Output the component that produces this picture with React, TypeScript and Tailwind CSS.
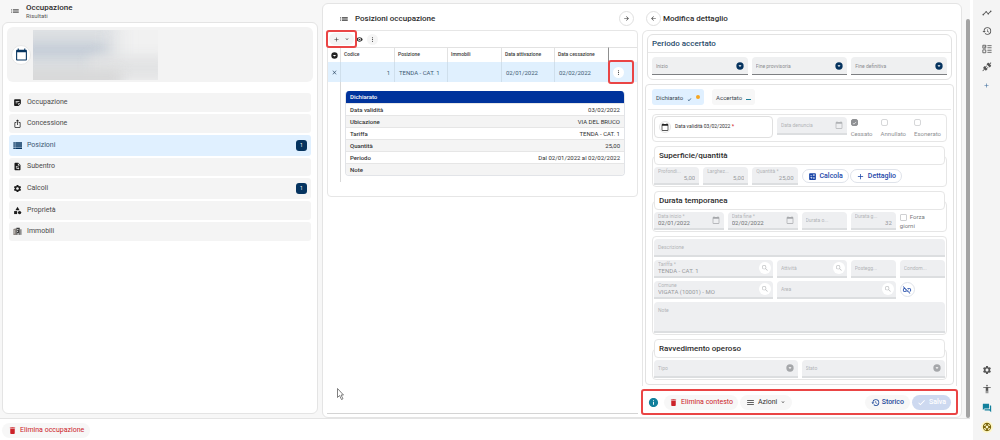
import { useId, type ReactNode } from "react";
import {
  MdAccessibility,
  MdAdd,
  MdArrowBack,
  MdArrowForward,
  MdCalculate,
  MdCalendarToday,
  MdCategory,
  MdCheck,
  MdClose,
  MdDelete,
  MdExpandMore,
  MdForum,
  MdHistory,
  MdInfo,
  MdIosShare,
  MdLinkOff,
  MdList,
  MdMenu,
  MdMoreVert,
  MdRemoveRedEye,
  MdSearch,
  MdSettings,
  MdStickyNote2,
  MdSupport,
  MdTimeline,
} from "react-icons/md";

const FIELD =
  "relative flex min-w-0 items-center rounded-t-sm border-b-2 border-[#dcdee0] bg-[#eeeff1] px-1 text-[#b3b5b8]";

function DropCircle({ className }: { className: string }) {
  return (
    <svg viewBox="0 0 24 24" className={`size-2 shrink-0 ${className}`} aria-hidden="true">
      <circle cx="12" cy="12" r="11" fill="currentColor" />
      <path d="M7.500 10h9L12 15z" fill="#fff" />
    </svg>
  );
}

function PlugIcon({ className }: { className: string }) {
  return (
    <svg viewBox="0 0 24 24" className={className} fill="currentColor" aria-hidden="true">
      <path d="M21.4 7.5c.8.8.8 2.1 0 2.8l-2.8 2.9-7.8-7.8 2.9-2.8c.7-.8 2-.8 2.8 0l1.4 1.4L21 .8 22.4 2.2 19.2 5.400zM15.600 13.300l-1.400-1.400-2.900 2.800-2.100-2.100 2.800-2.900-1.400-1.400-2.800 2.900-1.500-1.500-2.800 2.900c-.8.800-.8 2.100 0 2.800l1.400 1.400-4 4 1.400 1.400 4-4 1.400 1.400c.8.800 2.100.800 2.800 0l2.900-2.800-1.500-1.500z" />
    </svg>
  );
}

function DocSwapIcon() {
  return (
    <svg viewBox="0 0 24 24" className="size-[9px]" fill="currentColor" aria-hidden="true">
      <path
        fillRule="evenodd"
        d="M14 2H6a2 2 0 0 0-2 2v16a2 2 0 0 0 2 2h12a2 2 0 0 0 2-2V8zM13 9V3.500L18.500 9zM7 13l3-3v2h5v2h-5v2zM17 17l-3 3v-2H9v-2h5v-2z"
      />
    </svg>
  );
}

function BuildingsIcon() {
  return (
    <svg viewBox="0 0 24 24" className="size-[9px]" aria-hidden="true">
      <path d="M1 5 9 3v18H1z" fill="#8c8580" />
      <path d="M9 2h9v19H9z" fill="#3b3b3b" />
      <path d="M18 6h5v15h-5z" fill="#8f8f8f" />
      <path d="M11 5h2v3h-2zM15 5h1v3h-1zM11 10h2v3h-2zM4 8h1v10H4zM12 16h3v5h-3z" fill="#eee" />
    </svg>
  );
}

type FieldProps = {
  label: string;
  value?: string;
  span: string;
  right?: boolean;
  dark?: boolean;
  icon?: ReactNode;
};

function Field({ label, value, span, right, dark, icon }: FieldProps) {
  const id = useId();
  return (
    <div className={`${FIELD} h-[18px] ${span}`}>
      {value ? (
        <div className="flex min-w-0 flex-1 flex-col">
          <label htmlFor={id} className="truncate text-[5px] leading-[6px]">
            {label}
          </label>
          <input
            id={id}
            disabled
            defaultValue={value}
            className={`h-[8px] w-full bg-transparent text-[6px] leading-[8px] ${right ? "text-right" : ""} ${dark ? "text-[#707275]" : "text-[#97999c]"}`}
          />
        </div>
      ) : (
        <>
          <label htmlFor={id} className="flex-1 truncate text-[5px] leading-[6px]">
            {label}
          </label>
          <input id={id} disabled className="absolute inset-0 w-full bg-transparent" />
        </>
      )}
      {icon}
    </div>
  );
}

function SelectField({ label, span, disabled }: { label: string; span: string; disabled?: boolean }) {
  const id = useId();
  return (
    <div
      className={`relative flex h-[18px] min-w-0 items-center rounded-t-sm px-1 ${span} ${
        disabled
          ? "border-b-2 border-[#dcdee0] bg-[#eeeff1] text-[#b3b5b8]"
          : "border-b border-[#7d7f82] bg-[#eff0f1] text-[#8b8d90]"
      }`}
    >
      <label htmlFor={id} className="flex-1 truncate text-[5px] leading-[6px]">
        {label}
      </label>
      <DropCircle className={disabled ? "text-[#a5a7aa]" : "text-[#05335f]"} />
      <select id={id} disabled={disabled} className="absolute inset-0 w-full appearance-none bg-transparent">
        <option value="" />
      </select>
    </div>
  );
}

function SearchButton() {
  return (
    <button
      type="button"
      aria-label="Cerca"
      disabled
      className="relative -mr-[2px] flex size-3 shrink-0 items-center justify-center rounded-full bg-white text-[#bcbec0]"
    >
      <MdSearch className="size-2" />
    </button>
  );
}

function Calendar({ className }: { className: string }) {
  return <MdCalendarToday className={`size-2 shrink-0 ${className}`} aria-hidden="true" />;
}

function TickBox({ label, checked }: { label: string; checked?: boolean }) {
  return (
    <label className="flex flex-col gap-1 text-[6px] leading-[8px] text-[#8f9194]">
      <span
        className={`relative flex size-[7px] items-center justify-center rounded-[2px] border ${
          checked ? "border-[#8f9194] bg-[#8f9194]" : "border-[#d6d7d9] bg-white"
        }`}
      >
        <input type="checkbox" defaultChecked={checked} disabled className="absolute inset-0 size-full appearance-none" />
        {checked && <MdCheck className="size-[6px] text-white" />}
      </span>
      {label}
    </label>
  );
}

function Group({ title, children }: { title: string; children: ReactNode }) {
  return (
    <section className="relative px-[2px] pb-[2px]">
      <div className="absolute inset-x-0 top-[10px] bottom-0 rounded border border-[#e6e6e6]" />
      <h3 className="relative flex h-[19px] items-center rounded border border-[#e6e6e6] bg-white px-1 text-[8px] font-medium text-[#2c2c2c]">
        {title}
      </h3>
      <div className="relative mt-[2px] grid grid-cols-12 gap-1">{children}</div>
    </section>
  );
}

const MENU: { label: string; icon: ReactNode; badge?: number; active?: boolean }[] = [
  { label: "Occupazione", icon: <MdStickyNote2 className="size-[9px]" /> },
  { label: "Concessione", icon: <MdIosShare className="size-[9px]" /> },
  {
    label: "Posizioni",
    badge: 1,
    active: true,
    icon: (
      <svg viewBox="0 0 24 24" className="size-[9px]" fill="#05335f" aria-hidden="true">
        <path d="M1 3h4v4H1zM6 3h18v4H6zM1 8.500h4v4H1zM6 8.500h18v4H6zM1 14h4v3H1zM6 14h18v3H6zM1 18.500h4v3H1zM6 18.500h18v3H6z" />
      </svg>
    ),
  },
  { label: "Subentro", icon: <DocSwapIcon /> },
  { label: "Calcoli", badge: 1, icon: <MdSettings className="size-[9px]" /> },
  { label: "Proprietà", icon: <MdCategory className="size-[9px]" /> },
  { label: "Immobili", icon: <BuildingsIcon /> },
];

const DETAILS: [string, string][] = [
  ["Data validità", "03/02/2022"],
  ["Ubicazione", "VIA DEL BRUCO"],
  ["Tariffa", "TENDA - CAT. 1"],
  ["Quantità", "25,00"],
  ["Periodo", "Dal 02/01/2022 al 02/02/2022"],
  ["Note", ""],
];

function LeftColumn() {
  return (
    <section className="flex flex-col pr-1 pb-1 pl-[2px]">
      <header className="flex h-[22px] items-center gap-[6px] pl-2 text-[#555]">
        <MdList className="size-[10px]" />
        <div>
          <h1 className="text-[8px] leading-[8px] font-medium text-[#2c2c2c]">Occupazione</h1>
          <p className="text-[6px] leading-[7px] text-[#555]">Risultati</p>
        </div>
      </header>
      <div className="flex-1 rounded-md border border-[#e4e4e4] bg-white px-1 pt-1">
        <div className="flex h-[55px] items-center gap-[2px] rounded-md bg-[#f3f3f3] pl-1">
          <span className="flex size-5 items-center justify-center rounded-full border border-[#e8e8e8] bg-white text-[#05335f]">
            <MdCalendarToday className="size-[13px]" />
          </span>
          <div className="relative h-[50px] w-[125px] overflow-hidden bg-[#f1f1f1]">
            <div className="absolute -top-3 -left-5 h-20 w-[104px] bg-[#dcdfe2] blur-[9px]" />
            <div className="absolute top-[14px] -left-3 h-3 w-[84px] bg-[#c1cad6] blur-[6px]" />
            <div className="absolute top-[26px] left-14 h-6 w-20 bg-[#e2e3e4] blur-[6px]" />
            <div className="absolute top-[40px] -left-3 h-4 w-[100px] bg-[#d8d8d8] blur-[6px]" />
          </div>
        </div>
        <nav className="mx-[2px] mt-[11px] grid h-[148px] gap-[2px]">
          {MENU.map((item) => (
            <a
              key={item.label}
              href="#"
              className={`flex items-center gap-[5px] rounded-[3px] px-1 text-[7px] leading-[9px] ${
                item.active ? "bg-[#e0f0ff] text-[#3a5673]" : "bg-[#f4f4f4] text-[#4a4a4a]"
              }`}
            >
              <span className="text-[#1b1b1b]">{item.icon}</span>
              <span className="flex-1">{item.label}</span>
              {item.badge && (
                <span className="flex h-[11px] w-[11px] items-center justify-center rounded-[3px] bg-[#05335f] text-[5px] text-white">
                  {item.badge}
                </span>
              )}
            </a>
          ))}
        </nav>
      </div>
    </section>
  );
}

function Positions() {
  const head = "border-l border-[#e2e2e2] px-[3px] text-left text-[5px] font-medium text-[#3c3c3c]";
  const cell = "border-l border-[#cfdfec] px-1";
  return (
    <section className="relative flex min-w-0 flex-col">
      <header className="flex h-[26px] items-center pt-[3px] pr-1 pl-3 text-[#333]">
        <MdList className="size-[10px]" />
        <h2 className="flex-1 pl-[6px] text-[8px] font-medium text-[#2c2c2c]">Posizioni occupazione</h2>
        <button
          type="button"
          aria-label="Avanti"
          className="flex size-[15px] items-center justify-center rounded-full border border-[#e0e0e0] bg-white"
        >
          <MdArrowForward className="size-[7px]" />
        </button>
      </header>
      <div className="rounded-sm border border-[#e6e6e6] pb-[14px]">
        <div className="flex h-4 items-center text-[#333]">
          <div className="relative z-10 rounded-[1px] outline-2 outline-[#ea4545]">
            <div className="flex h-[14px] w-[27px] items-center px-[1px]">
              <div className="flex h-3 flex-1 items-center justify-between rounded-full bg-[#f4f4f4] px-1">
                <button type="button" aria-label="Aggiungi">
                  <MdAdd className="size-[7px]" />
                </button>
                <button type="button" aria-label="Altre aggiunte">
                  <MdExpandMore className="size-[6px]" />
                </button>
              </div>
            </div>
          </div>
          <button type="button" aria-label="Mostra" className="pl-px">
            <MdRemoveRedEye className="size-[7px]" />
          </button>
          <button
            type="button"
            aria-label="Altro"
            className="ml-1 flex size-[11px] items-center justify-center rounded-full bg-[#f5f5f5]"
          >
            <MdMoreVert className="size-[7px]" />
          </button>
        </div>
        <table className="w-full table-fixed border-separate border-spacing-0">
          <colgroup>
            <col className="w-[12px]" />
            <col className="w-[54px]" />
            <col className="w-[53px]" />
            <col className="w-[54px]" />
            <col className="w-[53px]" />
            <col className="w-[54px]" />
            <col />
          </colgroup>
          <thead>
            <tr className="h-[15px] [&>th]:border-t [&>th]:border-t-[#e2e2e2]">
              <th className="p-0" aria-label="Espandi">
                <svg viewBox="0 0 24 24" className="mx-auto size-[7px]" aria-hidden="true">
                  <circle cx="12" cy="12" r="11" fill="#222" />
                  <path d="M6 10h12l-6 5z" fill="#fff" />
                </svg>
              </th>
              <th className={head}>Codice</th>
              <th className={head}>Posizione</th>
              <th className={head}>Immobili</th>
              <th className={head}>Data attivazione</th>
              <th className={head}>Data cessazione</th>
              <th className="border-l border-[#8f8f8f]" aria-label="Azioni" />
            </tr>
          </thead>
          <tbody>
            <tr className="h-5 bg-[#e0f0fe] text-[6px] text-[#3f5b75]">
              <td className="p-0">
                <button type="button" aria-label="Chiudi" className="mx-auto block">
                  <MdClose className="size-[7px]" />
                </button>
              </td>
              <td className={`${cell} text-right`}>1</td>
              <td className={cell}>TENDA - CAT. 1</td>
              <td className={cell} />
              <td className={cell}>02/01/2022</td>
              <td className={cell}>02/02/2022</td>
              <td className="p-0">
                <div className="mx-[2px] flex h-5 w-[22px] items-center rounded-[1px] pl-[3px] outline-2 outline-[#ea4545]">
                  <button
                    type="button"
                    aria-label="Altro"
                    className="flex size-[11px] items-center justify-center rounded-full bg-white text-[#333]"
                  >
                    <MdMoreVert className="size-[7px]" />
                  </button>
                </div>
              </td>
            </tr>
            <tr>
              <td className="p-0" />
              <td colSpan={6} className="border-l border-[#d9d9d9] pt-[9px] pr-3 pb-[6px] pl-1">
                <div className="overflow-hidden rounded border border-t-0 border-[#e2e4e8]">
                  <table className="w-full border-separate border-spacing-0 text-[6px] leading-[8px] text-[#333]">
                    <thead>
                      <tr className="h-3 bg-[#00339c] text-white">
                        <th colSpan={2} className="px-1 py-0 text-left font-medium">
                          Dichiarato
                        </th>
                      </tr>
                    </thead>
                    <tbody>
                      {DETAILS.map(([name, value]) => (
                        <tr key={name} className="h-3 even:bg-[#f4f4f4]">
                          <th className="border-t border-[#e6e6e6] px-1 py-0 text-left font-medium">{name}</th>
                          <td className="border-t border-[#e6e6e6] px-1 py-0 text-right">{value}</td>
                        </tr>
                      ))}
                    </tbody>
                  </table>
                </div>
              </td>
            </tr>
          </tbody>
        </table>
      </div>
      <div className="mt-auto mb-[3px] border-b border-[#d4d4d4]" />
      <svg viewBox="0 0 14 24" className="absolute top-[384px] left-[10px] h-3 w-[7px]" aria-hidden="true">
        <path d="M1 1v18l4-4 4 8 3-1.500-4-7.500h5z" fill="#fff" stroke="#555" strokeWidth="1.500" />
      </svg>
    </section>
  );
}

function DetailForm() {
  const pill = "flex items-center justify-center rounded-full text-[7px]";
  return (
    <section className="flex min-w-0 flex-col">
      <header className="flex h-[26px] items-center gap-[2px] pt-[3px] pl-1 text-[#333]">
        <button
          type="button"
          aria-label="Indietro"
          className="flex size-[15px] items-center justify-center rounded-full border border-[#e0e0e0] bg-white"
        >
          <MdArrowBack className="size-[7px]" />
        </button>
        <h2 className="text-[8px] font-medium text-[#2c2c2c]">Modifica dettaglio</h2>
      </header>
      <div className="flex-1 rounded-t-md border border-b-0 border-[#e6e6e6] px-[2px] pt-[3px]">
        <section className="mx-[2px] rounded-md border border-[#e2e2e2] pb-1">
          <h3 className="flex h-[18px] items-center border-b border-[#e8e8e8] px-1 text-[8px] font-medium text-[#274a6b]">
            Periodo accertato
          </h3>
          <div className="grid grid-cols-3 gap-1 px-1 pt-1">
            <SelectField label="Inizio" span="" />
            <SelectField label="Fine provvisoria" span="" />
            <SelectField label="Fine definitiva" span="" />
          </div>
        </section>
        <div className="mt-1 rounded border border-[#e2e2e2] px-[2px] pb-1">
          <div role="tablist" className="flex h-[25px] items-center gap-2 border-b border-[#e8e8e8] px-1 text-[6px] text-[#3c4650]">
            <button
              type="button"
              role="tab"
              aria-selected="true"
              className="flex h-4 items-center gap-1 rounded-[3px] bg-[#e0f0ff] px-1"
            >
              Dichiarato
              <MdCheck className="mt-1 size-[5px] text-[#05335f]" />
              <span className="size-1 rounded-full bg-[#f5a623]" />
            </button>
            <button
              type="button"
              role="tab"
              aria-selected="false"
              className="flex h-4 items-center gap-1 rounded-[3px] bg-[#f7f7f7] px-1"
            >
              Accertato
              <span className="mt-1 h-px w-[5px] bg-[#1d7f99]" />
            </button>
          </div>
          <div className="flex flex-col gap-1 px-1 pt-1">
            <div className="grid grid-cols-12 items-start gap-1 rounded border border-[#e6e6e6] p-px pb-[3px]">
              <label className="col-span-5 flex h-[22px] items-center gap-1 rounded border border-[#e0e0e0] px-1 text-[5px] text-[#333]">
                <span className="flex size-3 items-center justify-center rounded-full border border-[#e4e4e4]">
                  <Calendar className="text-[#222]" />
                </span>
                <span>
                  Data validità 03/02/2022 <b className="text-[#d32f2f]">*</b>
                </span>
                <input type="hidden" value="2022-02-03" />
              </label>
              <Field label="Data denuncia" span="col-span-3 mt-px" icon={<Calendar className="text-[#b0b2b5]" />} />
              <div className="col-span-4 flex justify-between pt-[3px] pr-1">
                <TickBox label="Cessato" checked />
                <TickBox label="Annullato" />
                <TickBox label="Esonerato" />
              </div>
            </div>
            <Group title="Superficie/quantità">
              <Field label="Profondi..." value="5,00" right span="col-span-2" />
              <Field label="Larghez..." value="5,00" right span="col-span-2" />
              <Field label="Quantità *" value="25,00" right span="col-span-2" />
              <div className="col-span-6 flex items-center gap-px text-[#1a46a8]">
                <button
                  type="button"
                  className={`${pill} h-[14px] gap-[3px] border border-[#dfe3ea] bg-white px-[5px] font-medium`}
                >
                  <MdCalculate className="size-[9px]" />
                  Calcola
                </button>
                <button
                  type="button"
                  className={`${pill} h-[14px] gap-[3px] border border-[#dfe3ea] bg-white px-[5px] font-medium`}
                >
                  <MdAdd className="size-[9px]" />
                  Dettaglio
                </button>
              </div>
            </Group>
            <Group title="Durata temporanea">
              <Field label="Data inizio *" value="02/01/2022" dark span="col-span-3" icon={<Calendar className="text-[#a5a7aa]" />} />
              <Field label="Data fine *" value="02/02/2022" dark span="col-span-3" icon={<Calendar className="text-[#a5a7aa]" />} />
              <Field label="Durata o..." span="col-span-2" />
              <Field label="Durata g..." value="32" right span="col-span-2" />
              <label className="col-span-2 pr-3 text-[6px] leading-[9px] text-[#77797c]">
                <input
                  type="checkbox"
                  className="mr-[3px] size-[7px] appearance-none rounded-[1px] border border-[#cfd0d2] bg-white align-middle"
                />
                Forza giorni
              </label>
            </Group>
            <div className="grid grid-cols-12 items-start gap-x-1 gap-y-[3px] rounded border border-[#e6e6e6] px-px pt-[2px] pb-px">
              <Field label="Descrizione" span="col-span-12" />
              <Field label="Tariffa *" value="TENDA - CAT. 1" span="col-span-5" icon={<SearchButton />} />
              <Field label="Attività" span="col-span-3" icon={<SearchButton />} />
              <Field label="Postegg..." span="col-span-2" />
              <Field label="Condom..." span="col-span-2" />
              <Field label="Comune" value="VIGATA (10001) - MO" span="col-span-5" icon={<SearchButton />} />
              <Field label="Area" span="col-span-5" icon={<SearchButton />} />
              <button
                type="button"
                aria-label="Scollega"
                className="col-span-2 mt-px flex size-[15px] items-center justify-center rounded-full border border-[#dfe3ea] bg-white text-[#1a46a8]"
              >
                <MdLinkOff className="size-[10px]" />
              </button>
              <label className="relative col-span-12 h-[31px] rounded-t-sm border-b-2 border-[#dcdee0] bg-[#eeeff1] px-1 pt-[5px] text-[5px] leading-[6px] text-[#b3b5b8]">
                <span className="block">Note</span>
                <textarea disabled className="absolute inset-0 size-full resize-none bg-transparent" />
              </label>
            </div>
            <Group title="Ravvedimento operoso">
              <SelectField label="Tipo" span="col-span-6" disabled />
              <SelectField label="Stato" span="col-span-6" disabled />
            </Group>
          </div>
        </div>
      </div>
      <footer className="-mx-px mt-[3px] mb-[2px] flex h-[26px] items-center gap-[2px] rounded-[3px] border-2 border-[#ea4545] px-[5px]">
        <button type="button" aria-label="Informazioni" className="mr-[3px] text-[#12809c]">
          <MdInfo className="size-[11px]" />
        </button>
        <button type="button" className={`${pill} h-[15px] gap-[3px] bg-[#f7f7f7] px-[5px] text-[#cc2229]`}>
          <MdDelete className="size-[9px]" />
          Elimina contesto
        </button>
        <button type="button" className={`${pill} h-[15px] gap-[3px] bg-[#f7f7f7] px-[6px] text-[#333]`}>
          <MdMenu className="size-[9px]" />
          Azioni
          <MdExpandMore className="size-[6px]" />
        </button>
        <button type="button" className={`${pill} ml-auto h-[15px] gap-[2px] bg-[#f7f7f7] px-[6px] font-medium text-[#1f4a9c]`}>
          <MdHistory className="size-[9px]" />
          Storico
        </button>
        <button type="button" disabled className={`${pill} h-[15px] gap-[3px] bg-[#cdd9f0] px-[5px] font-medium text-white`}>
          <MdCheck className="size-[9px]" />
          Salva
        </button>
      </footer>
    </section>
  );
}

function Rail() {
  const tool = "flex size-3 items-center justify-center";
  return (
    <aside className="flex w-[27px] flex-col items-center gap-[6px] bg-[#f4f4f4] pt-[7px] pb-[7px] text-[#555]">
      <button type="button" aria-label="Andamento" className={tool}>
        <MdTimeline className="size-[10px]" />
      </button>
      <button type="button" aria-label="Cronologia" className={tool}>
        <MdHistory className="size-[10px]" />
      </button>
      <button type="button" aria-label="Elenco" className={tool}>
        <svg viewBox="0 0 24 24" className="size-[10px]" fill="none" stroke="currentColor" strokeWidth="2" aria-hidden="true">
          <path d="M2 3h7v7H2zM2 14h7v7H2zM13 4h10M13 9h10M13 15h10M13 20h10M4 6l2 2 3-4" />
        </svg>
      </button>
      <button type="button" aria-label="Connessioni" className={tool}>
        <PlugIcon className="size-[10px]" />
      </button>
      <button type="button" aria-label="Aggiungi" className={`${tool} text-[#3a6a9c]`}>
        <MdAdd className="size-[7px]" />
      </button>
      <div className="mt-auto flex flex-col items-center gap-[7px]">
        <button type="button" aria-label="Impostazioni" className={tool}>
          <MdSettings className="size-[10px]" />
        </button>
        <button type="button" aria-label="Accessibilità" className={tool}>
          <MdAccessibility className="size-[10px]" />
        </button>
        <button type="button" aria-label="Messaggi" className={`${tool} text-[#12809c]`}>
          <MdForum className="size-[10px]" />
        </button>
        <button type="button" aria-label="Assistenza" className={`${tool} rounded-full bg-[#fdf6c8] text-[#7a6508]`}>
          <MdSupport className="size-[10px]" />
        </button>
      </div>
    </aside>
  );
}

export default function App() {
  return (
    <div className="flex min-h-screen bg-white font-['Roboto',sans-serif] leading-normal">
      <div className="mr-[3px] flex flex-1 flex-col">
        <div className="flex flex-1 border-b border-[#e4e4e4] bg-[#f7f7f7]">
          <main className="grid flex-1 grid-cols-[322fr_640fr] pr-1">
            <LeftColumn />
            <div className="mt-[3px] grid grid-cols-[311fr_315fr] gap-1 rounded-md border border-[#e4e4e4] bg-white px-1">
              <Positions />
              <DetailForm />
            </div>
          </main>
          <div className="mt-[19px] w-1 rounded-full bg-[#a3a3a3]" />
        </div>
        <footer className="flex h-[21px] items-center px-[2px] pt-px">
          <button
            type="button"
            className="flex h-[15px] items-center gap-[3px] rounded-full bg-[#f7f7f7] px-[6px] text-[7px] text-[#cc2229]"
          >
            <MdDelete className="size-[9px]" />
            Elimina occupazione
          </button>
        </footer>
      </div>
      <Rail />
    </div>
  );
}
